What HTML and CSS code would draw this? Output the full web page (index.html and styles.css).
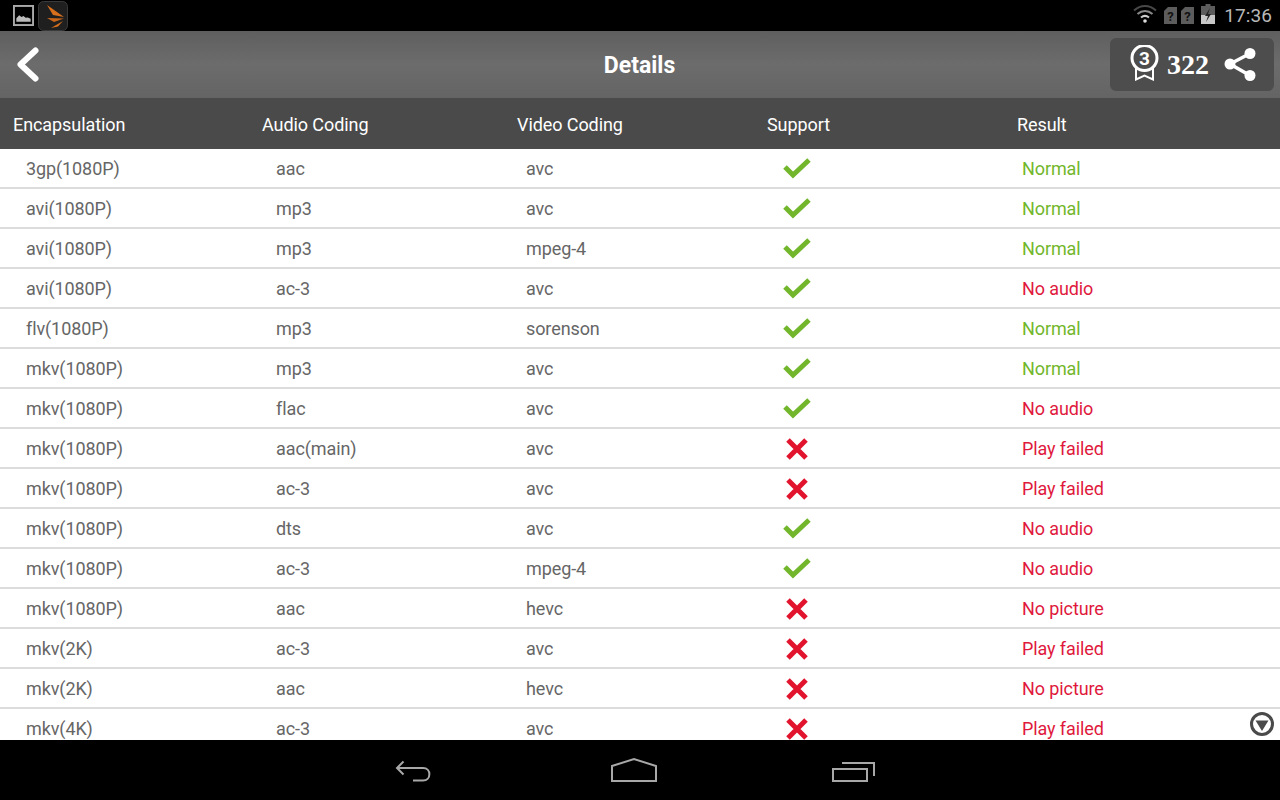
FILE: index.html
```html
<!DOCTYPE html>
<html lang="en">
  <head>
    <meta charset="UTF-8" />
    <meta name="viewport" content="width=device-width, initial-scale=1.0" />
    <title>Details</title>
    <link rel="stylesheet" href="styles.css">
  </head>
  <body>
    <div class="status-bar">
      <div class="status-left">
        <svg class="pic-icon" width="21" height="21" viewBox="0 0 22 22">
          <rect x="1" y="1" width="20" height="20" fill="#000" stroke="#aaa" stroke-width="2"/>
          <path d="M3.500 17.500v-3.500l3-3.200 2.400 1.700 2.100-.9 2.300 1.800 2.200-.4 3 1.500v3z" fill="#bbb"/>
        </svg>
        <svg class="app-icon" width="30" height="30" viewBox="0 0 30 30">
          <rect x="0.500" y="0.500" width="29" height="29" rx="5" fill="#1f1f1f" stroke="#3a3a3a"/>
          <path d="M9 4l17 12-11-2z" fill="#d9701c"/>
          <path d="M9 17l17 .5-10 3.500z" fill="#c9661a"/>
          <path d="M13 27l12-7-5 5.500z" fill="#d9701c"/>
        </svg>
      </div>
      <div class="status-right">
        <svg class="wifi" width="24" height="20" viewBox="0 0 24 20" fill="none" stroke-width="2">
          <path d="M1 6.500c6.500-6 15.500-6 22 0" stroke="#484848"/>
          <path d="M4.500 10c4.500-4 10.500-4 15 0" stroke="#8a8a8a"/>
          <path d="M8 13.500c2.500-2 5.500-2 8 0" stroke="#ccc"/>
          <circle cx="12" cy="17" r="1.800" fill="#ddd"/>
        </svg>
        <svg class="sim" width="13" height="17" viewBox="0 0 13 17"><path d="M0 4l4-4h9v17H0z" fill="#5c5c5c"/><text x="6.500" y="14" class="sim-text">?</text></svg>
        <svg class="sim" width="13" height="17" viewBox="0 0 13 17"><path d="M0 4l4-4h9v17H0z" fill="#5c5c5c"/><text x="6.500" y="14" class="sim-text">?</text></svg>
        <svg class="battery" width="14" height="20" viewBox="0 0 14 20">
          <path d="M4.500 0h5v2H14v18H0V2h4.500z" fill="#5c5c5c"/>
          <path d="M0 11h14v9H0z" fill="#c8c8c8"/>
          <path d="M9 4l-5 8h3l-2 6 5-8H7z" fill="#222"/>
        </svg>
        <span class="clock">17:36</span>
      </div>
    </div>

    <div class="title-bar">
      <svg class="back" width="26" height="38" viewBox="0 0 26 38" fill="none" stroke="#fff" stroke-width="6" stroke-linecap="round" stroke-linejoin="round">
        <path d="M19.500 4.500L4.500 18.500l15 14"/>
      </svg>
      <h1>Details</h1>
      <div class="score">
        <svg class="medal" width="30" height="36" viewBox="0 0 30 36" fill="none" stroke="#fff" stroke-width="2">
          <path d="M6 23v11.500l8.500-4 8.500 4V23"/>
          <circle cx="14.500" cy="13" r="12.500" fill="#4d4d4d" stroke-width="3"/>
          <text x="14.500" y="19.500" class="medal-num">3</text>
        </svg>
        <span class="score-num">322</span>
        <svg class="share" width="34" height="34" viewBox="0 0 34 34" fill="#fff">
          <path d="M27 5.500L7 16l20 11.500" fill="none" stroke="#fff" stroke-width="3.500"/>
          <circle cx="27" cy="5.500" r="5.500"/>
          <circle cx="7" cy="16" r="5.500"/>
          <circle cx="27" cy="27.500" r="5.500"/>
        </svg>
      </div>
    </div>

    <div class="table-head">
      <div>Encapsulation</div>
      <div>Audio Coding</div>
      <div>Video Coding</div>
      <div>Support</div>
      <div>Result</div>
    </div>

    <div class="table-body">
      <div class="row"><div>3gp(1080P)</div><div>aac</div><div>avc</div><div class="ok"></div><div class="good">Normal</div></div>
      <div class="row"><div>avi(1080P)</div><div>mp3</div><div>avc</div><div class="ok"></div><div class="good">Normal</div></div>
      <div class="row"><div>avi(1080P)</div><div>mp3</div><div>mpeg-4</div><div class="ok"></div><div class="good">Normal</div></div>
      <div class="row"><div>avi(1080P)</div><div>ac-3</div><div>avc</div><div class="ok"></div><div class="bad">No audio</div></div>
      <div class="row"><div>flv(1080P)</div><div>mp3</div><div>sorenson</div><div class="ok"></div><div class="good">Normal</div></div>
      <div class="row"><div>mkv(1080P)</div><div>mp3</div><div>avc</div><div class="ok"></div><div class="good">Normal</div></div>
      <div class="row"><div>mkv(1080P)</div><div>flac</div><div>avc</div><div class="ok"></div><div class="bad">No audio</div></div>
      <div class="row"><div>mkv(1080P)</div><div>aac(main)</div><div>avc</div><div class="no"></div><div class="bad">Play failed</div></div>
      <div class="row"><div>mkv(1080P)</div><div>ac-3</div><div>avc</div><div class="no"></div><div class="bad">Play failed</div></div>
      <div class="row"><div>mkv(1080P)</div><div>dts</div><div>avc</div><div class="ok"></div><div class="bad">No audio</div></div>
      <div class="row"><div>mkv(1080P)</div><div>ac-3</div><div>mpeg-4</div><div class="ok"></div><div class="bad">No audio</div></div>
      <div class="row"><div>mkv(1080P)</div><div>aac</div><div>hevc</div><div class="no"></div><div class="bad">No picture</div></div>
      <div class="row"><div>mkv(2K)</div><div>ac-3</div><div>avc</div><div class="no"></div><div class="bad">Play failed</div></div>
      <div class="row"><div>mkv(2K)</div><div>aac</div><div>hevc</div><div class="no"></div><div class="bad">No picture</div></div>
      <div class="row"><div>mkv(4K)</div><div>ac-3</div><div>avc</div><div class="no"></div><div class="bad">Play failed</div></div>
      <svg class="scroll-down" width="26" height="26" viewBox="0 0 26 26">
        <circle cx="13" cy="13" r="10.500" fill="#fff" stroke="#4a4a4a" stroke-width="3"/>
        <path d="M6.500 9.500h13L13 20z" fill="#4a4a4a"/>
      </svg>
    </div>

    <div class="nav-bar">
      <svg width="41" height="26" viewBox="0 0 41 26" fill="none" stroke="#a8a8a8" stroke-width="2">
        <path d="M9.500 4.500L3 11l6.500 6.500"/>
        <path d="M3 11h26c8.500 0 8.500 12.500 0 12.500H19"/>
      </svg>
      <svg width="46" height="26" viewBox="0 0 46 26" fill="none" stroke="#a8a8a8" stroke-width="2">
        <path d="M1 9L23 2l22 7v15H1z"/>
      </svg>
      <svg width="44" height="26" viewBox="0 0 44 26" fill="none" stroke="#a8a8a8" stroke-width="2">
        <path d="M1 12h34v12H1z"/>
        <path d="M10 6h32v13"/>
      </svg>
    </div>

    <script>
      const tick = '<svg width="28" height="22" viewBox="0 0 28 22" fill="none" stroke="#72b62b" stroke-width="5"><path d="M2 10l8 8L26 3"/></svg>';
      const cross = '<svg width="22" height="22" viewBox="0 0 22 22" fill="none" stroke="#e2142d" stroke-width="5"><path d="M2 2l18 18M20 2L2 20"/></svg>';
      document.querySelectorAll(".ok").forEach((cell) => { cell.innerHTML = tick; });
      document.querySelectorAll(".no").forEach((cell) => { cell.innerHTML = cross; });
    </script>
  </body>
</html>
```

FILE: styles.css
```css
html,
body {
  margin: 0;
  height: 800px;
  overflow: hidden;
}

body {
  display: flex;
  flex-direction: column;
  font-family: Roboto, "Liberation Sans", sans-serif;
  background-color: #fff;
}

.status-bar {
  flex: 0 0 31px;
  display: flex;
  justify-content: space-between;
  align-items: center;
  background-color: #000;
}

.status-left {
  display: flex;
  align-items: center;
  gap: 4px;
  padding-left: 13px;
}

.status-right {
  display: flex;
  align-items: center;
  gap: 4px;
  padding-right: 8px;
}

.wifi {
  margin: 0 3px 4px 0;
}

.sim-text {
  font-family: Roboto, sans-serif;
  font-size: 13px;
  font-weight: 700;
  fill: #111;
  text-anchor: middle;
}

.battery {
  margin: 0 5px 3px 3px;
}

.clock {
  color: #b8b8b8;
  font-size: 19px;
  letter-spacing: 0.1px;
}

.title-bar {
  flex: 0 0 67px;
  display: flex;
  align-items: center;
  justify-content: space-between;
  padding: 0 6px 0 16px;
  position: relative;
  background: linear-gradient(#5f5f5f, #6c6c6c 50%, #646464);
}

.title-bar h1 {
  position: absolute;
  left: 0;
  right: 1px;
  margin: 0;
  padding-top: 2px;
  text-align: center;
  color: #fff;
  font-size: 23px;
  font-weight: 700;
}

.score {
  position: relative;
  width: 164px;
  height: 53px;
  box-sizing: border-box;
  padding: 0 0 0 20px;
  display: flex;
  align-items: center;
  background-color: #4d4d4d;
  border-radius: 6px;
}

.medal {
  margin-top: -3px;
}

.medal-num {
  font-family: Roboto, sans-serif;
  font-size: 19px;
  font-weight: 700;
  fill: #fff;
  stroke: none;
  text-anchor: middle;
}

.score-num {
  margin-left: 7px;
  color: #fff;
  font-family: "Liberation Serif", serif;
  font-size: 28px;
  font-weight: 700;
}

.share {
  margin-left: 14px;
}

.table-head,
.row {
  display: grid;
  align-items: center;
  font-size: 18px;
}

.table-head {
  flex: 0 0 51px;
  grid-template-columns: 249px 255px 250px 250px 1fr;
  background-color: #4a4a4a;
  color: #fff;
  padding-left: 13px;
  padding-top: 1px;
  box-sizing: border-box;
  letter-spacing: -0.08px;
}

.table-body {
  flex: 1;
  position: relative;
  overflow: hidden;
}

.row {
  height: 40px;
  box-sizing: border-box;
  padding-left: 26px;
  border-bottom: 2px solid #dcdcdc;
  color: #666;
  letter-spacing: -0.1px;
  grid-template-columns: 250px 250px 250px 246px 1fr;
}

.ok,
.no {
  display: flex;
  align-items: center;
  padding-left: 7px;
}

.no {
  padding-top: 2px;
  padding-left: 10px;
}

.good {
  color: #72b62b;
}

.bad {
  color: #e0193c;
}

.scroll-down {
  position: absolute;
  right: 5px;
  bottom: 3px;
}

.nav-bar {
  flex: 0 0 60px;
  display: flex;
  justify-content: center;
  align-items: center;
  gap: 175.5px;
  padding-right: 10px;
  background-color: #000;
}
```
